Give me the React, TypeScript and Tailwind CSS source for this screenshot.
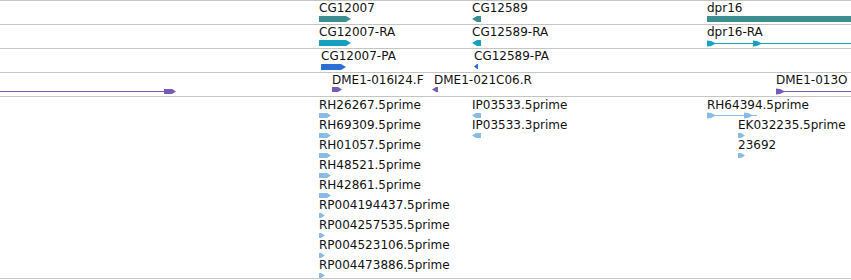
import React from 'react'

// Colours picked off the track glyphs
const GENE = '#3c8f90'
const MRNA = '#17a1c1'
const CDS = '#2c6fd4'
const CLONE = '#7a5bb4'
const EST = '#8abbe2'

type Dir = 'r' | 'l'

// Block with a pointed end, the usual strand glyph
function Block({ w, h, color, dir = 'r', tip = 5, className = '' }: {
  w: number; h: number; color: string; dir?: Dir; tip?: number; className?: string
}) {
  const pts = dir === 'r'
    ? `0,0 ${w - tip},0 ${w},${h / 2} ${w - tip},${h} 0,${h}`
    : `${tip},0 ${w},0 ${w},${h} ${tip},${h} 0,${h / 2}`
  return (
    <svg className={'block shrink-0 ' + className} width={w} height={h}>
      <polygon points={pts} fill={color} />
    </svg>
  )
}

// Thin intron line with small flag arrows along it
function Line({ w, color, arrows = [], className = '' }: {
  w: number; color: string; arrows?: number[]; className?: string
}) {
  return (
    <svg className={'block shrink-0 ' + className} width={w} height={7}>
      <rect x={0} y={3} width={w} height={1} fill={color} />
      {arrows.map((a) => (
        <polygon key={a} points={`${a},0.5 ${a + 4},1 ${a + 9},3.5 ${a + 4},6 ${a},6.5`} fill={color} />
      ))}
    </svg>
  )
}

function Label({ children }: { children: React.ReactNode }) {
  return <span className="block whitespace-nowrap text-[12px] leading-[14px] text-[#111]">{children}</span>
}

// A feature is label over glyph; its left edge is its genomic coordinate
function Feature({ at, label, children }: { at: string; label?: string; children: React.ReactNode }) {
  return (
    <div className={'absolute top-0 flex flex-col items-start ' + at}>
      {label && <Label>{label}</Label>}
      {children}
    </div>
  )
}

function Track({ children, className = 'h-[24px]' }: { children: React.ReactNode; className?: string }) {
  return <div className={'relative shrink-0 border-t border-[#c4c4c4] ' + className}>{children}</div>
}

const ests = [
  { name: 'RH26267.5prime', w: 12 },
  { name: 'RH69309.5prime', w: 12 },
  { name: 'RH01057.5prime', w: 12 },
  { name: 'RH48521.5prime', w: 12 },
  { name: 'RH42861.5prime', w: 12 },
  { name: 'RP004194437.5prime', w: 6 },
  { name: 'RP004257535.5prime', w: 6 },
  { name: 'RP004523106.5prime', w: 6 },
  { name: 'RP004473886.5prime', w: 6 },
]

function EstItem({ name, children }: { name: string; children: React.ReactNode }) {
  return (
    <div className="flex h-[20px] flex-col items-start">
      <Label>{name}</Label>
      {children}
    </div>
  )
}

export default function App() {
  return (
    <div className="flex h-[280px] w-[851px] flex-col overflow-hidden bg-white font-['DejaVu_Sans',Verdana,sans-serif]">
      {/* Gene */}
      <Track>
        <Feature at="left-[319px]" label="CG12007">
          <Block className="mt-px" w={32} h={6} color={GENE} />
        </Feature>
        <Feature at="left-[472px]" label="CG12589">
          <Block className="mt-px" w={9} h={6} color={GENE} dir="l" />
        </Feature>
        <Feature at="left-[707px] right-0" label="dpr16">
          <div className="mt-px h-[6px] w-full bg-[#3c8f90]" />
        </Feature>
      </Track>

      {/* Transcripts */}
      <Track>
        <Feature at="left-[319px]" label="CG12007-RA">
          <Block className="mt-px" w={32} h={6} color={MRNA} />
        </Feature>
        <Feature at="left-[472px]" label="CG12589-RA">
          <Block className="mt-px" w={9} h={6} color={MRNA} dir="l" />
        </Feature>
        <Feature at="left-[707px]" label="dpr16-RA">
          <Line className="mt-px" w={144} color={MRNA} arrows={[0, 46]} />
        </Feature>
      </Track>

      {/* Polypeptides */}
      <Track>
        <Feature at="left-[321px]" label="CG12007-PA">
          <Block className="mt-px" w={25} h={6} color={CDS} />
        </Feature>
        <Feature at="left-[474px]" label="CG12589-PA">
          <Block className="mt-px" w={4} h={5} color={CDS} dir="l" tip={3} />
        </Feature>
      </Track>

      {/* Clone ends */}
      <Track>
        <div className="absolute left-0 top-[15px] flex items-center">
          <Line w={166} color={CLONE} />
          <Block className="-ml-[2px]" w={12} h={5} color={CLONE} tip={4} />
        </div>
        <Feature at="left-[332px]" label="DME1-016I24.F">
          <Block w={10} h={5} color={CLONE} tip={4} />
        </Feature>
        <Feature at="left-[432px]">
          <div className="flex flex-col items-start">
            <span className="pl-[2px]"><Label>DME1-021C06.R</Label></span>
            <Block w={6} h={5} color={CLONE} dir="l" tip={4} />
          </div>
        </Feature>
        <Feature at="left-[776px]" label="DME1-013O">
          <Line className="mt-px" w={75} color={CLONE} arrows={[0]} />
        </Feature>
      </Track>

      {/* ESTs */}
      <Track className="h-[183px] border-b">
        <div className="absolute left-[319px] top-px flex flex-col">
          {ests.map((e) => (
            <EstItem key={e.name} name={e.name}>
              <Block className="mt-px" w={e.w} h={5} color={EST} tip={4} />
            </EstItem>
          ))}
        </div>
        <div className="absolute left-[472px] top-px flex flex-col">
          <EstItem name="IP03533.5prime">
            <Block className="mt-px" w={9} h={5} color={EST} dir="l" tip={4} />
          </EstItem>
          <EstItem name="IP03533.3prime">
            <Block className="mt-px" w={9} h={5} color={EST} dir="l" tip={4} />
          </EstItem>
        </div>
        <div className="absolute left-[707px] top-px flex flex-col">
          <EstItem name="RH64394.5prime">
            <Line w={50} color={EST} arrows={[0, 37]} />
          </EstItem>
          <div className="flex flex-col pl-[31px]">
            <EstItem name="EK032235.5prime">
              <Block className="mt-px" w={7} h={5} color={EST} tip={4} />
            </EstItem>
            <EstItem name="23692">
              <Block className="mt-px" w={7} h={5} color={EST} tip={4} />
            </EstItem>
          </div>
        </div>
      </Track>
    </div>
  )
}
